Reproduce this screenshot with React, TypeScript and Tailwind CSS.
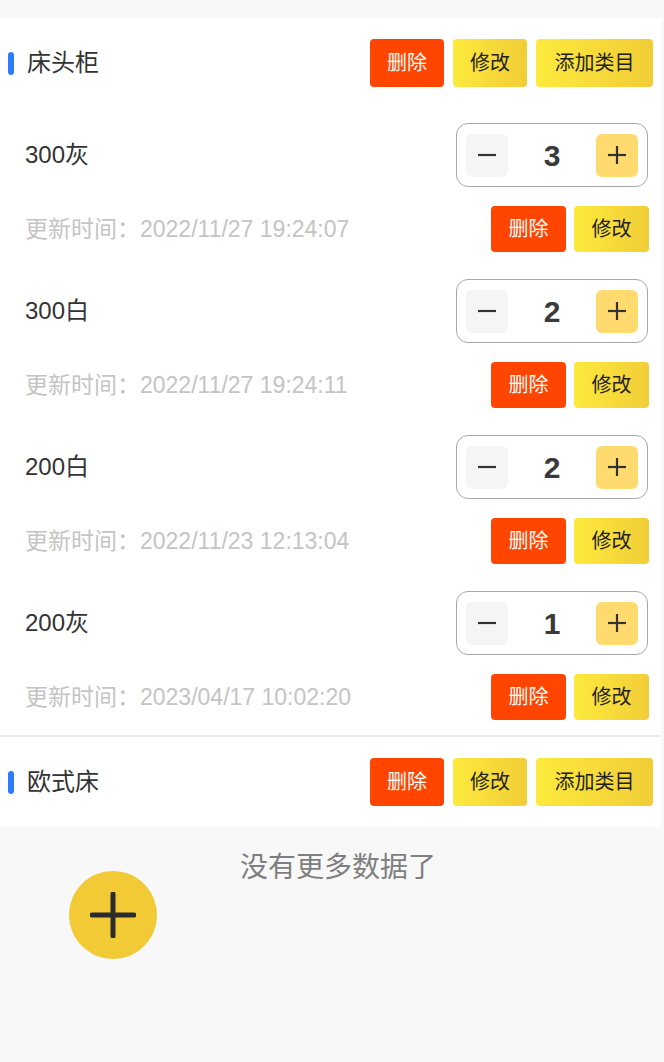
import React from 'react';

type Item = { name: string; count: number; time: string };

const groups: { title: string; items: Item[] }[] = [
  {
    title: '床头柜',
    items: [
      { name: '300灰', count: 3, time: '2022/11/27 19:24:07' },
      { name: '300白', count: 2, time: '2022/11/27 19:24:11' },
      { name: '200白', count: 2, time: '2022/11/23 12:13:04' },
      { name: '200灰', count: 1, time: '2023/04/17 10:02:20' },
    ],
  },
  { title: '欧式床', items: [] },
];

const font = { fontFamily: '"Liberation Sans", "Noto Sans CJK SC", sans-serif' };

function RedBtn({ className = '' }: { className?: string }) {
  return (
    <button className={`bg-[#ff4500] text-white rounded-[4px] text-[20px] flex items-center justify-center ${className}`}>
      删除
    </button>
  );
}

function YellowBtn({ label, className = '' }: { label: string; className?: string }) {
  return (
    <button
      className={`bg-gradient-to-r from-[#fdea3c] to-[#f1cd37] text-[#222] rounded-[4px] text-[20px] flex items-center justify-center ${className}`}
    >
      {label}
    </button>
  );
}

function Header({ title }: { title: string }) {
  return (
    <div className="flex items-center h-[90px] pl-[8px] pr-[8px]">
      <span className="w-[6px] h-[23px] rounded-full bg-[#2f7bff]" />
      <span className="ml-[13px] text-[24px] text-[#333]">{title}</span>
      <div className="ml-auto flex gap-[9px]">
        <RedBtn className="w-[74px] h-[48px]" />
        <YellowBtn label="修改" className="w-[74px] h-[48px]" />
        <YellowBtn label="添加类目" className="w-[117px] h-[48px]" />
      </div>
    </div>
  );
}

function Stepper({ count }: { count: number }) {
  return (
    <div className="w-[192px] h-[64px] border border-[#a8a8a8] rounded-[12px] flex items-center justify-between px-[9px]">
      <span className="w-[42px] h-[43px] rounded-[6px] bg-[#f5f5f5] flex items-center justify-center">
        <svg width="20" height="20" viewBox="0 0 20 20">
          <line x1="1" y1="10" x2="19" y2="10" stroke="#333" strokeWidth="2.2" />
        </svg>
      </span>
      <span className="text-[30px] font-semibold text-[#3a3a3a]">{count}</span>
      <span className="w-[42px] h-[43px] rounded-[6px] bg-[#ffda6e] flex items-center justify-center">
        <svg width="20" height="20" viewBox="0 0 20 20">
          <line x1="1" y1="10" x2="19" y2="10" stroke="#333" strokeWidth="2.2" />
          <line x1="10" y1="1" x2="10" y2="19" stroke="#333" strokeWidth="2.2" />
        </svg>
      </span>
    </div>
  );
}

function Row({ item }: { item: Item }) {
  return (
    <div className="pt-[15px] pb-[12px] pl-[25px] pr-[13px]">
      <div className="flex items-center justify-between h-[64px]">
        <span className="text-[24px] text-[#333]">{item.name}</span>
        <Stepper count={item.count} />
      </div>
      <div className="flex items-center justify-between h-[46px] mt-[19px]">
        <span className="text-[23px] text-[#c4c4c4]">更新时间：{item.time}</span>
        <div className="flex gap-[8px] mr-[-1px]">
          <RedBtn className="w-[75px] h-[46px]" />
          <YellowBtn label="修改" className="w-[75px] h-[46px]" />
        </div>
      </div>
    </div>
  );
}

export default function App() {
  return (
    <div className="relative min-h-[1062px] bg-[#f8f8f8] pt-[18px]" style={font}>
      <div className="bg-white mr-[3px]">
        {groups.map((g, i) => (
          <div key={g.title} className={i === 0 ? 'border-b-2 border-[#ebedf0] pb-[3px]' : ''}>
            <Header title={g.title} />
            {g.items.map((it) => (
              <Row key={it.name + it.time} item={it} />
            ))}
          </div>
        ))}
      </div>
      <div className="text-center text-[28px] text-[#7f7f7f] pt-[20px] pl-[12px]">没有更多数据了</div>
      <button className="absolute left-[69px] top-[871px] w-[88px] h-[88px] rounded-full bg-[#f2ca35] flex items-center justify-center">
        <svg width="46" height="46" viewBox="0 0 46 46">
          <line x1="2" y1="23" x2="44" y2="23" stroke="#2b2b2b" strokeWidth="5" strokeLinecap="round" />
          <line x1="23" y1="2" x2="23" y2="44" stroke="#2b2b2b" strokeWidth="5" strokeLinecap="round" />
        </svg>
      </button>
    </div>
  );
}
